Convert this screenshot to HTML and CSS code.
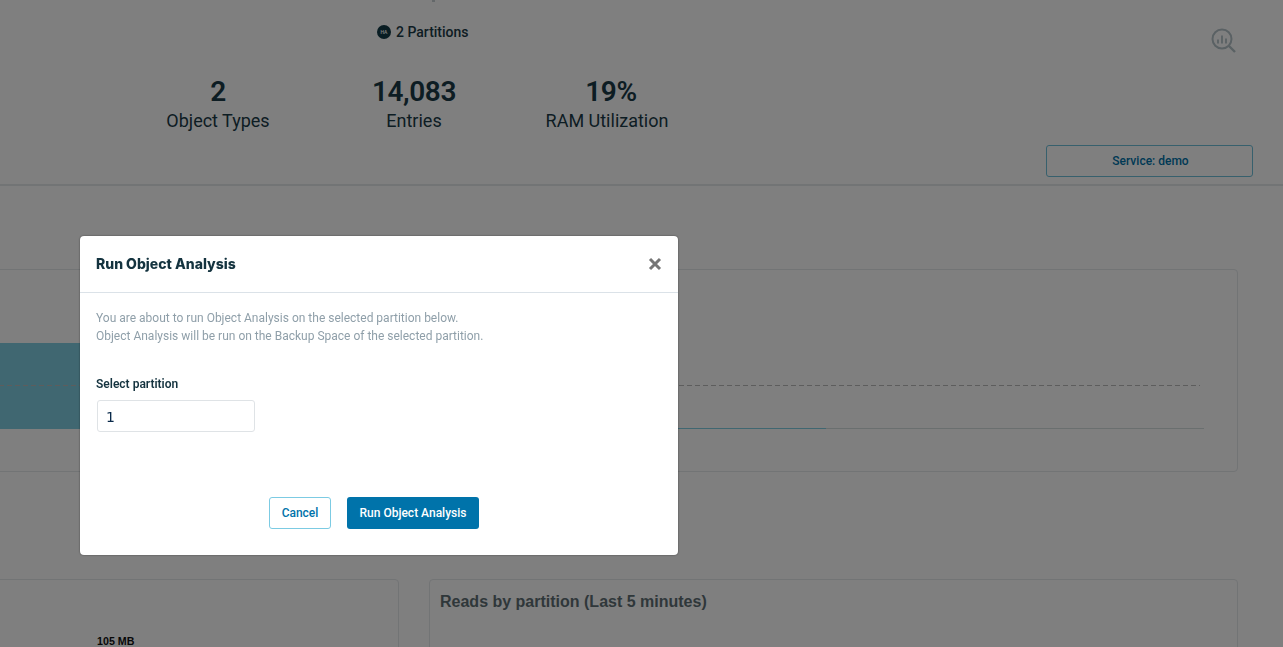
FILE: index.html
```html
<!DOCTYPE html>
<html lang="en">
<head>
    <meta charset="UTF-8">
    <meta name="viewport" content="width=device-width, initial-scale=1.0">
    <title>Run Object Analysis</title>
    <link rel="stylesheet" href="styles.css">
</head>
<body>
    <header class="summary">
        <div class="cut-off-mark"></div>
        <div class="summary-top">
            <div class="partitions">
                <span class="ha-badge">HA</span>
                <span>2 Partitions</span>
            </div>
            <svg class="analysis-icon" width="26" height="26" viewBox="0 0 26 26" fill="none">
                <circle cx="11" cy="11" r="9.5" stroke="#b4c2c8" stroke-width="2"/>
                <path d="M18 18l6 6" stroke="#b4c2c8" stroke-width="2.4"/>
                <path d="M7 11.5v4M11 7.5v8M15 10.5v5" stroke="#b4c2c8" stroke-width="1.8"/>
            </svg>
        </div>
        <div class="stats">
            <div class="stat"><div class="stat-value">2</div><div class="stat-label">Object Types</div></div>
            <div class="stat"><div class="stat-value">14,083</div><div class="stat-label">Entries</div></div>
            <div class="stat"><div class="stat-value stat-value-pct">19%</div><div class="stat-label">RAM Utilization</div></div>
        </div>
        <div class="service-row">
            <button class="service-btn">Service: demo</button>
        </div>
    </header>

    <section class="panel panel-chart">
        <svg class="chart" width="1220" height="200" viewBox="0 0 1220 200">
            <rect x="0" y="73" width="90" height="86" fill="#81cfe3"/>
            <line x1="0" y1="115.5" x2="1209" y2="115.5" stroke="#bbb" stroke-dasharray="5 3"/>
            <line x1="0" y1="158.5" x2="1213" y2="158.5" stroke="#d4dede"/>
            <line x1="0" y1="158.5" x2="835" y2="158.5" stroke="#81cfe3"/>
        </svg>
    </section>

    <div class="panel-row">
        <section class="panel panel-memory">
            <div class="memory-label">105 MB</div>
        </section>
        <section class="panel panel-reads">
            <h3>Reads by partition (Last 5 minutes)</h3>
        </section>
    </div>

    <!-- Modal -->
    <div class="modal">
        <div class="modal-content">
            <div class="modal-header">
                <h2>Run Object Analysis</h2>
                <svg class="close-btn" width="14" height="14" viewBox="0 0 14 14">
                    <path d="M2 2l10 10M12 2L2 12" stroke="#757575" stroke-width="3"/>
                </svg>
            </div>
            <div class="modal-body">
                <p>You are about to run Object Analysis on the selected partition below.<br>Object Analysis will be run on the Backup Space of the selected partition.</p>
                <label for="partition">Select partition</label>
                <input type="text" id="partition" value="1">
            </div>
            <div class="modal-footer">
                <button class="btn btn-cancel">Cancel</button>
                <button class="btn btn-run">Run Object Analysis</button>
            </div>
        </div>
    </div>
</body>
</html>
```

FILE: styles.css
```css
html, body { height: 647px; overflow: hidden; }
body { margin: 0; background-color: #fff; font-family: Roboto, "Liberation Sans", sans-serif; color: #1a3a47; }

.summary { height: 184px; border-bottom: 2px solid #e4e8ea; box-sizing: content-box; }
.cut-off-mark { width: 3px; height: 2px; margin-left: 432px; background-color: #c8d0d4; }
.summary-top { display: flex; justify-content: space-between; align-items: flex-start; height: 72px; padding: 22px 46px 0 377px; box-sizing: border-box; }
.partitions { display: flex; align-items: center; gap: 5px; height: 16px; font-size: 14px; font-weight: 500; }
.ha-badge { width: 14px; height: 14px; border-radius: 50%; background-color: #123a47; color: #fff; font-size: 5px; line-height: 14px; text-align: center; }
.analysis-icon { margin-top: 4px; }

.stats { display: grid; grid-template-columns: 196px 196px 190px; padding-left: 120px; text-align: center; }
.stat-value { font-size: 28px; font-weight: 600; letter-spacing: -0.4px; line-height: 36px; }
.stat-value-pct { padding-left: 8px; }
.stat-label { font-size: 18px; line-height: 22px; }

.service-row { display: flex; justify-content: flex-end; padding: 13px 30px 0 0; }
.service-btn { width: 207px; height: 32px; padding-left: 8px; background-color: #fff; border: 1px solid #6fc0da; border-radius: 3px; color: #0073aa; font-family: inherit; font-size: 12px; font-weight: 500; }

.panel { border: 1px solid #e4e8ea; border-radius: 4px; box-sizing: border-box; }
.panel-chart { height: 203px; margin: 83px 45px 0 -10px; overflow: hidden; }
.chart { display: block; }

.panel-row { display: flex; gap: 30px; height: 68px; margin: 107px 45px 0 -10px; overflow: hidden; }
.panel-memory { width: 409px; height: 120px; padding: 55px 0 0 106px; }
.memory-label { font-family: "Liberation Sans", sans-serif; font-size: 10.7px; font-weight: 700; color: #111; }
.panel-reads { flex: 1; height: 120px; padding: 13px 10px; }
.panel-reads h3 { margin: 0; font-family: "Liberation Sans", sans-serif; font-size: 16px; font-weight: 700; color: #5f6f75; }

/* Modal styles */
.modal { position: fixed; top: 0; left: 0; width: 100%; height: 100%; background-color: rgba(0,0,0,0.5); padding: 236px 0 0 80px; box-sizing: border-box; }
.modal-content { width: 598px; height: 319px; background-color: #fff; border-radius: 4px; box-shadow: 0 0 2px rgba(0,0,0,0.5); }
.modal-header { display: flex; justify-content: space-between; align-items: center; height: 57px; padding: 0 16px; border-bottom: 1px solid #dbe2e8; box-sizing: border-box; }
.modal-header h2 { margin: 0 0 2px; font-family: Inter, Roboto, sans-serif; font-size: 14px; font-weight: 800; color: #14333f; }
.modal-body { height: 204px; padding: 16px 16px 0; box-sizing: border-box; }
.modal-body p { margin: 0 0 32px; font-size: 12px; line-height: 18px; color: #8f9fa9; }
.modal-body label { display: block; margin-bottom: 8px; font-size: 12px; font-weight: 600; line-height: 15px; color: #14333f; }
.modal-body input { display: block; width: 158px; height: 32px; margin-left: 1px; padding: 1px 7px 0 8px; border: 1px solid #dfe3e6; border-radius: 3px; box-sizing: border-box; font-family: "DejaVu Sans", sans-serif; font-size: 14px; color: #0a2a4a; }
.modal-footer { display: flex; gap: 16px; padding-left: 189px; }
.btn { height: 32px; border-radius: 3px; font-family: inherit; font-size: 12px; font-weight: 500; box-sizing: border-box; }
.btn-cancel { width: 62px; background-color: #fff; border: 1px solid #7ccbe3; color: #0073aa; }
.btn-run { width: 132px; padding-left: 6px; background-color: #0073aa; border: none; color: #fff; }
```
